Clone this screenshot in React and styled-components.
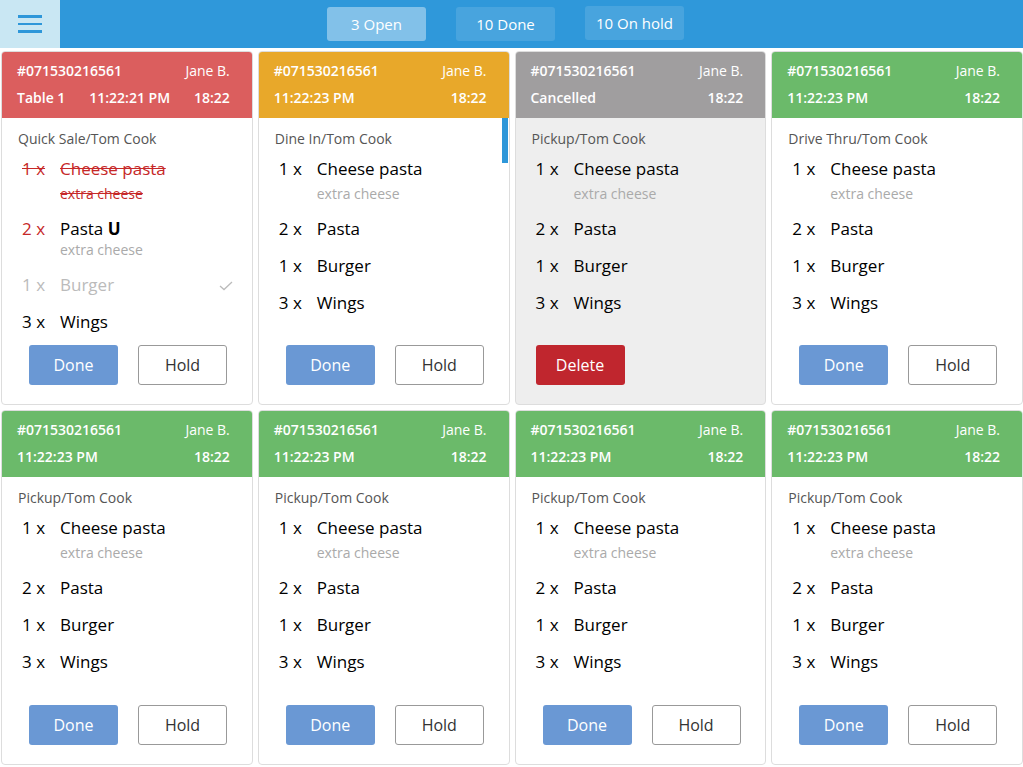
import React from 'react';
import styled, {createGlobalStyle} from 'styled-components';

const Global = createGlobalStyle`
  html, body {
    margin: 0;
    padding: 0;
    background: #fff;
    font-family: "Open Sans", "Noto Sans", sans-serif;
  }
`;

const headerColors = {
  red: '#db5e5e',
  orange: '#e8a82a',
  gray: '#a09e9f',
  green: '#6bba6a',
};

const TopBar = styled.div`
  display: flex;
  align-items: center;
  height: 48px;
  background: #2f98da;
`;
const MenuButton = styled.div`
  display: flex;
  flex-direction: column;
  justify-content: center;
  gap: 5px;
  width: 60px;
  height: 48px;
  padding-left: 18px;
  box-sizing: border-box;
  background: #c9e7f3;
  span {
    display: block;
    width: 24px;
    height: 2.5px;
    background: #2e97d9;
  }
`;
const Tabs = styled.div`
  display: flex;
  gap: 30px;
  padding-left: 267px;
`;
const Tab = styled.div`
  width: 99px;
  height: 34px;
  margin-top: ${p => (p.$raised ? '-1px' : '0')};
  display: flex;
  align-items: center;
  justify-content: center;
  border-radius: 3px;
  background: ${p => (p.$active ? 'rgba(255,255,255,0.4)' : 'rgba(255,255,255,0.12)')};
  color: #fff;
  font-size: 15px;
`;

const Grid = styled.div`
  display: grid;
  grid-template-columns: repeat(4, 1fr);
  grid-template-rows: 354px 355px;
  gap: 5px;
  padding: 3px 0 0 1px;
`;
const Card = styled.div`
  display: flex;
  flex-direction: column;
  border: 1px solid #ddd;
  border-radius: 4px;
  overflow: hidden;
  background: ${p => (p.$cancelled ? '#eeeeee' : '#fff')};
`;
const Header = styled.div`
  height: 67px;
  flex: none;
  display: flex;
  flex-direction: column;
  justify-content: center;
  gap: 7px;
  padding: 0 23px 0 16px;
  margin: -1px -1px 0;
  background: ${p => headerColors[p.$tone]};
  color: #fff;
  font-size: 14px;
`;
const HeaderRow = styled.div`
  display: flex;
  justify-content: space-between;
  line-height: 20px;
  font-weight: 600;
`;
const Waiter = styled.span`
  font-weight: 400;
`;
const Body = styled.div`
  position: relative;
  flex: 1;
  display: flex;
  flex-direction: column;
  padding: 11px 0 0 0;
  min-height: 0;
`;
const Channel = styled.div`
  padding-left: 16px;
  margin-bottom: 1px;
  font-size: 14px;
  line-height: 20px;
  color: #555;
`;
const Items = styled.div`
  flex: 1;
  overflow: hidden;
`;
const Item = styled.div`
  display: flex;
  padding: 6.5px 0;
`;
const Qty = styled.div`
  width: 38px;
  padding-left: 20px;
  flex: none;
  font-size: 17px;
  line-height: 24px;
  color: ${p => (p.$state === 'red' || p.$state === 'struck' ? '#c62828' : p.$state === 'done' ? '#bbb' : '#000')};
  text-decoration: ${p => (p.$state === 'struck' ? 'line-through' : 'none')};
`;
const Main = styled.div`
  flex: 1;
`;
const Name = styled.div`
  font-size: 17px;
  line-height: 24px;
  color: ${p => (p.$state === 'struck' ? '#c62828' : p.$state === 'done' ? '#bbb' : '#000')};
  text-decoration: ${p => (p.$state === 'struck' ? 'line-through' : 'none')};
  b {
    font-weight: 700;
  }
`;
const Note = styled.div`
  margin-top: ${p => (p.$tight ? '-1px' : '3px')};
  font-size: 14px;
  line-height: 20px;
  color: ${p => (p.$struck ? '#c62828' : '#aaa')};
  text-decoration: ${p => (p.$struck ? 'line-through' : 'none')};
`;
const Check = styled.svg`
  width: 16px;
  height: 16px;
  margin: 4px 18px 0 0;
`;
const Actions = styled.div`
  display: flex;
  gap: 20px;
  padding: 0 0 19px ${p => (p.$start ? '20px' : '27px')};
`;
const Button = styled.button`
  width: 89px;
  height: 40px;
  border-radius: 3px;
  font-family: inherit;
  font-size: 16px;
  cursor: pointer;
  border: ${p => (p.$kind === 'hold' ? '1px solid #999' : 'none')};
  background: ${p => (p.$kind === 'done' ? '#6a98d4' : p.$kind === 'delete' ? '#c0262e' : '#fff')};
  color: ${p => (p.$kind === 'hold' ? '#333' : '#fff')};
`;
const ScrollThumb = styled.div`
  position: absolute;
  top: 0;
  right: 1px;
  width: 6px;
  height: 45px;
  background: #2e97d9;
`;

const standardItems = [
  {qty: '1 x', name: 'Cheese pasta', note: 'extra cheese'},
  {qty: '2 x', name: 'Pasta'},
  {qty: '1 x', name: 'Burger'},
  {qty: '3 x', name: 'Wings'},
];

const firstItems = [
  {qty: '1 x', name: 'Cheese pasta', note: 'extra cheese', state: 'struck'},
  {qty: '2 x', name: <>Pasta <b>U</b></>, note: 'extra cheese', state: 'red', tight: true},
  {qty: '1 x', name: 'Burger', state: 'done'},
  {qty: '3 x', name: 'Wings'},
];

const orders = [
  {tone: 'red', info: ['Table 1', '11:22:21 PM'], channel: 'Quick Sale/Tom Cook', items: firstItems},
  {tone: 'orange', info: ['11:22:23 PM'], channel: 'Dine In/Tom Cook', items: standardItems, scroll: true},
  {tone: 'gray', info: ['Cancelled'], channel: 'Pickup/Tom Cook', items: standardItems, cancelled: true},
  {tone: 'green', info: ['11:22:23 PM'], channel: 'Drive Thru/Tom Cook', items: standardItems},
  {tone: 'green', info: ['11:22:23 PM'], channel: 'Pickup/Tom Cook', items: standardItems},
  {tone: 'green', info: ['11:22:23 PM'], channel: 'Pickup/Tom Cook', items: standardItems},
  {tone: 'green', info: ['11:22:23 PM'], channel: 'Pickup/Tom Cook', items: standardItems},
  {tone: 'green', info: ['11:22:23 PM'], channel: 'Pickup/Tom Cook', items: standardItems},
];

const OrderCard = ({order}) => (
  <Card $cancelled={order.cancelled}>
    <Header $tone={order.tone}>
      <HeaderRow>
        <span>#071530216561</span>
        <Waiter>Jane B.</Waiter>
      </HeaderRow>
      <HeaderRow>
        {order.info.map(t => <span key={t}>{t}</span>)}
        <span>18:22</span>
      </HeaderRow>
    </Header>
    <Body>
      {order.scroll && <ScrollThumb/>}
      <Channel>{order.channel}</Channel>
      <Items>
        {order.items.map((it, i) => (
          <Item key={i}>
            <Qty $state={it.state}>{it.qty}</Qty>
            <Main>
              <Name $state={it.state}>{it.name}</Name>
              {it.note && <Note $struck={it.state === 'struck'} $tight={it.tight}>{it.note}</Note>}
            </Main>
            {it.state === 'done' && (
              <Check viewBox="0 0 16 16">
                <polyline points="2,9 6,12.5 14,5" fill="none" stroke="#bbb" strokeWidth="1.3"/>
              </Check>
            )}
          </Item>
        ))}
      </Items>
      {order.cancelled ? (
        <Actions $start>
          <Button $kind="delete">Delete</Button>
        </Actions>
      ) : (
        <Actions>
          <Button $kind="done">Done</Button>
          <Button $kind="hold">Hold</Button>
        </Actions>
      )}
    </Body>
  </Card>
);

const App = () => (
  <>
    <Global/>
    <TopBar>
      <MenuButton>
        <span/><span/><span/>
      </MenuButton>
      <Tabs>
        <Tab $active>3 Open</Tab>
        <Tab>10 Done</Tab>
        <Tab $raised>10 On hold</Tab>
      </Tabs>
    </TopBar>
    <Grid>
      {orders.map((o, i) => <OrderCard key={i} order={o}/>)}
    </Grid>
  </>
);

export default App;
